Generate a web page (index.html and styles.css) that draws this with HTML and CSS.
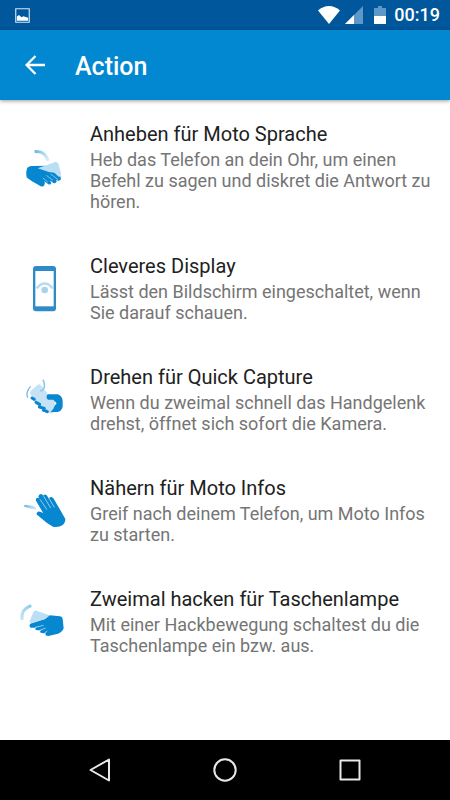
FILE: index.html
```html
<!DOCTYPE html>
<html lang="de">
<head>
<meta charset="utf-8">
<meta name="viewport" content="width=device-width, initial-scale=1">
<title>Action</title>
<link rel="stylesheet" href="styles.css">
</head>
<body>
<div class="status-bar">
  <svg class="status-picture" viewBox="0 0 16 16" aria-hidden="true">
    <path fill="none" stroke="#d5e9f8" stroke-width="1.200" d="M.8.8h14.4v14.4H.8z"/>
    <path fill="#fff" d="M2 13.500V9l2.200-1.600L7 9.800l2-.9 5 1.600v3z"/>
  </svg>
  <div class="status-right">
    <svg class="status-wifi" viewBox="0 0 24 20" aria-hidden="true"><path fill="#fff" d="M12 19 1 5.500Q6 1 12 1t11 4.500z"/></svg>
    <svg class="status-signal" viewBox="0 0 20 20" aria-hidden="true"><path fill="#5e98c8" d="M19 1v18H1z"/><path fill="#fff" d="M10 10v9H1z"/></svg>
    <svg class="status-battery" viewBox="0 0 12 20" aria-hidden="true"><path fill="#5e98c8" d="M4 1h4v2h4v8H0V3h4z"/><path fill="#fff" d="M0 11h12v8H0z"/></svg>
    <time class="clock">00:19</time>
  </div>
</div>
<header class="app-bar">
  <button class="back" type="button" aria-label="Zurück">
    <svg viewBox="0 0 20 20" aria-hidden="true"><path fill="none" stroke="#fff" stroke-width="2.300" d="M20 10H2M10.500 1 1.600 10l8.900 9"/></svg>
  </button>
  <h1 class="app-title">Action</h1>
</header>
<main class="content">
  <ul class="actions">
    <li class="action">
      <svg class="action-icon" viewBox="0 -9 210 180" aria-hidden="true">
        <defs><linearGradient id="lift"><stop offset="0" stop-color="#62b5df"/><stop offset="1" stop-color="#d9edf8"/></linearGradient></defs>
        <path fill="none" stroke="url(#lift)" stroke-width="9" d="M74 35Q103 30 115 62"/>
        <path fill="#0787d0" d="M52 83q5-5 13-5l52-1 32 24 4 16q-3 7-9 5l-5-3 1 6q-6 8-13 2l-8-6 5 8q-3 8-11 2l-10-7q4 7 0 12-4 6-12 2l-25-14-15-11q-5-13 1-30z"/>
        <path fill="#badef3" d="m83 85 53-19q6-1 9 5l8 29q0 8-6 11l-14-13-16-2z"/>
        <path fill="none" stroke="#badef3" stroke-width="2" d="m99 114 14 12m-4-20 20 15m-7-19 22 17"/>
      </svg>
      <div class="action-text">
        <h2>Anheben für Moto Sprache</h2>
        <p>Heb das Telefon an dein Ohr, um einen Befehl zu sagen und diskret die Antwort zu hören.</p>
      </div>
    </li>
    <li class="action">
      <svg class="action-icon" viewBox="0 9 210 180" aria-hidden="true">
        <rect x="69" y="30" width="69" height="136" rx="9" fill="#2e8bc8"/>
        <path fill="#fff" d="M76 45h55v106H76z"/>
        <path fill="none" stroke="#badbee" stroke-width="8" d="M80 97q24-29 48 0"/>
        <circle cx="104" cy="102" r="10" fill="#a9d3eb"/>
      </svg>
      <div class="action-text">
        <h2>Cleveres Display</h2>
        <p>Lässt den Bildschirm eingeschaltet, wenn Sie darauf schauen.</p>
      </div>
    </li>
    <li class="action">
      <svg class="action-icon" viewBox="0 12 210 180" aria-hidden="true">
        <path fill="none" stroke="#75bde2" stroke-width="4" d="M62 61q-16 17-9 34"/>
        <path fill="#c5e3f5" d="M61 83q-3-5 2-9l19-17q5-4 10 0l22 27 22 16-4 39q-7 7-13 3l-36-24z"/>
        <path fill="none" stroke="#8dcaea" stroke-width="5" d="M91 76q20-8 8-35"/>
        <path fill="#0787d0" d="M110 89q1-3 6-4h28q14 7 14 20v17q-4 14-16 16h-20q9-8 12-19l6-7-10-11h-16q-6-5-4-12z"/>
        <path fill="none" stroke="#0787d0" stroke-linecap="round" stroke-width="9" d="m66 96 7 4m5 9 11 6m-1 8 15 4m-3 5 12 5"/>
      </svg>
      <div class="action-text">
        <h2>Drehen für Quick Capture</h2>
        <p>Wenn du zweimal schnell das Handgelenk drehst, öffnet sich sofort die Kamera.</p>
      </div>
    </li>
    <li class="action">
      <svg class="action-icon" viewBox="0 3 210 180" aria-hidden="true">
        <defs><linearGradient id="near"><stop offset="0" stop-color="#65b7e0"/><stop offset="1" stop-color="#dceff9"/></linearGradient></defs>
        <path fill="url(#near)" d="m45 74 23 3q12 3 12 12l-13-2-24-7q-3-3 2-6z"/>
        <path fill="#0787d0" d="M81 98q4-6 12-2l7 4-22-38q-2-8 5-9 4 0 6 4l-4-7q1-8 8-8 4 0 7 5l1-2q4-4 9 1l7 10q1-6 7-5 4 0 7 5l21 36 14 25q0 12-9 19-12 7-28 4l-18-11-29-24q-4-3-1-7z"/>
        <path fill="none" stroke="#d6edf9" stroke-width="2" d="m90 58 21 31M101 49l21 35M117 55l16 27"/>
      </svg>
      <div class="action-text">
        <h2>Nähern für Moto Infos</h2>
        <p>Greif nach deinem Telefon, um Moto Infos zu starten.</p>
      </div>
    </li>
    <li class="action">
      <svg class="action-icon" viewBox="0 6 210 180" aria-hidden="true">
        <defs><linearGradient id="chop" x1="1" y1="0" x2="0" y2="1"><stop offset="0" stop-color="#8ccbea"/><stop offset="1" stop-color="#c4e4f5"/></linearGradient></defs>
        <path fill="none" stroke="url(#chop)" stroke-width="9" d="M64 47q-32 10-28 43"/>
        <path fill="#0787d0" d="m61 101 44-14 14-11 31 3q7 1 8 8l3 28q-4 12-17 16l-29 7q-10 0-9-9l7-2-8 2q-15 3-15-5l4-4q-17 3-19-3l5-5q-15 3-20 0-4-7 1-11z"/>
        <path fill="#badef3" d="m59 94 11-27q3-6 9-5l40 14-14 11-44 13z"/>
        <path fill="none" stroke="#dceff9" stroke-width="2" d="m76 112 25-6m-12 15 18-7m-4 16 9-7"/>
      </svg>
      <div class="action-text">
        <h2>Zweimal hacken für Taschenlampe</h2>
        <p>Mit einer Hackbewegung schaltest du die Taschenlampe ein bzw. aus.</p>
      </div>
    </li>
  </ul>
</main>
<nav class="nav-bar" aria-label="Systemnavigation">
  <button type="button" aria-label="Zurück"><svg viewBox="0 0 24 24" aria-hidden="true"><path d="M21 1.500v21L2.500 12z"/></svg></button>
  <button type="button" aria-label="Startbildschirm"><svg viewBox="0 0 24 24" aria-hidden="true"><circle cx="12" cy="12" r="10.700"/></svg></button>
  <button type="button" aria-label="Übersicht"><svg viewBox="0 0 24 24" aria-hidden="true"><path d="M2.500 2.500h19v19h-19z"/></svg></button>
</nav>
</body>
</html>
```
FILE: styles.css
```css
* {
  box-sizing: border-box;
}

body {
  margin: 0;
  min-height: 100vh;
  display: flex;
  flex-direction: column;
  background: #fff;
  font-family: Roboto, "Liberation Sans", sans-serif;
}

h1, h2, p, ul {
  margin: 0;
  padding: 0;
}

svg {
  display: block;
}

button {
  padding: 0;
  border: 0;
  background: none;
}

.status-bar {
  display: flex;
  align-items: center;
  justify-content: space-between;
  height: 30px;
  padding: 0 10px 0 15px;
  background: #01579b;
  color: #fff;
}

.status-picture {
  width: 15px;
  height: 15px;
}

.status-right {
  display: flex;
  align-items: center;
}

.status-wifi {
  width: 24px;
  height: 20px;
  margin-right: 3px;
}

.status-signal {
  width: 20px;
  height: 20px;
  margin-right: 10px;
}

.status-battery {
  width: 12px;
  height: 20px;
  margin-right: 8px;
}

.clock {
  font-size: 18px;
  font-weight: 500;
  line-height: 30px;
}

.app-bar {
  display: flex;
  align-items: center;
  gap: 20px;
  height: 70px;
  padding: 0 15px;
  background: #0288d1;
  color: #fff;
  box-shadow: 0 1px 4px rgba(0, 0, 0, 0.4);
}

.back {
  display: grid;
  place-items: center;
  width: 40px;
  height: 40px;
}

.back svg {
  width: 20px;
  height: 20px;
}

.app-title {
  padding-top: 3px;
  font-size: 25px;
  font-weight: 500;
  line-height: 30px;
}

.content {
  flex: 1;
  padding: 22px 15px 22px 10px;
}

.actions {
  display: grid;
  gap: 42px;
  list-style: none;
}

.action {
  display: flex;
  align-items: center;
  gap: 10px;
}

.action-icon {
  flex: none;
  width: 70px;
  height: 60px;
}

.action-text {
  flex: 1;
}

.action h2 {
  margin-bottom: 3px;
  color: #212121;
  font-size: 20px;
  font-weight: 400;
  line-height: 24px;
}

.action p {
  color: #757575;
  font-size: 18px;
  line-height: 21px;
}

.nav-bar {
  display: flex;
  align-items: center;
  justify-content: center;
  gap: 77px;
  height: 60px;
  background: #000;
}

.nav-bar button {
  display: grid;
  place-items: center;
  width: 48px;
  height: 48px;
}

.nav-bar svg {
  width: 24px;
  height: 24px;
  fill: none;
  stroke: #e8e8e8;
  stroke-width: 2;
  stroke-linejoin: round;
}
```
